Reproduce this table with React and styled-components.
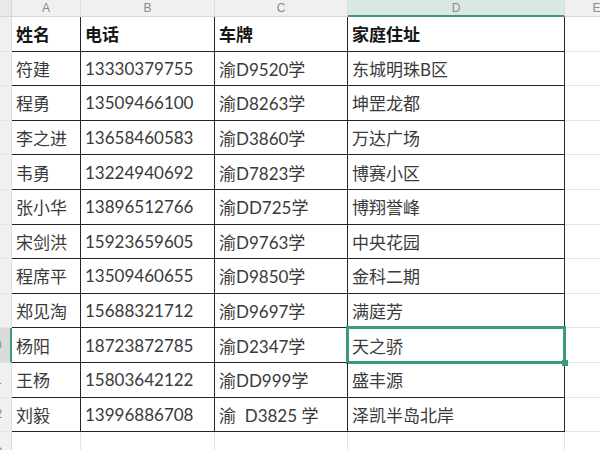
import styled, { createGlobalStyle } from 'styled-components';

const GlobalStyle = createGlobalStyle`
    html, body {
        margin: 0;
        padding: 0;
        background: #ffffff;
        overflow: hidden;
    }
`;

const Sheet = styled.div`
    display: grid;
    grid-template-columns: 32px 69px 134px 133px 217px 64px;
    grid-template-rows: 17px repeat(12, 34.6px) 40px;
    margin-left: -20px;
    width: max-content;
    height: 450px;
    font-family: 'Lato', 'Noto Sans CJK SC', sans-serif;
`;

const Corner = styled.div`
    background: #e9e9e9;
    border-right: 1px solid #d6d6d6;
    border-bottom: 1px solid #d6d6d6;
`;

const ColHead = styled.div`
    display: flex;
    align-items: center;
    justify-content: center;
    font-family: 'Liberation Sans', sans-serif;
    font-size: 12px;
    color: #8a8a8a;
    background: ${(p) => (p.$active ? '#dbe8e2' : '#f0f0f0')};
    border-right: 1px solid #dcdcdc;
    border-bottom: ${(p) => (p.$active ? '2px solid #3b9a7e' : '1px solid #d6d6d6')};
    box-sizing: border-box;
`;

const RowHead = styled.div`
    display: flex;
    align-items: center;
    justify-content: center;
    font-family: 'Liberation Sans', sans-serif;
    font-size: 12px;
    color: #8a8a8a;
    background: ${(p) => (p.$active ? '#d8dbd9' : '#f0f0f0')};
    border-right: ${(p) => (p.$active ? '2px solid #3b9a7e' : '1px solid #dcdcdc')};
    border-bottom: 1px solid #e2e2e2;
    box-sizing: border-box;
`;

const Cell = styled.div`
    position: relative;
    display: flex;
    align-items: center;
    padding-left: 4px;
    font-size: 17px;
    font-weight: ${(p) => (p.$head ? 700 : 400)};
    color: ${(p) => (p.$head ? '#151515' : '#3a3a3a')};
    white-space: pre;
    box-sizing: border-box;
    border-right: ${(p) => (p.$table ? '1.5px solid #262626' : '1px solid #e4e4e4')};
    border-bottom: ${(p) => (p.$table ? '1.5px solid #262626' : '1px solid #e4e4e4')};
    ${(p) =>
        p.$selected &&
        `
        &::after {
            content: '';
            position: absolute;
            top: -2px;
            left: -2px;
            right: -2px;
            bottom: -2px;
            border: 3px solid #3b9a7e;
        }
        &::before {
            content: '';
            position: absolute;
            right: -4px;
            bottom: -4px;
            width: 6px;
            height: 6px;
            background: #3b9a7e;
            z-index: 2;
        }
    `}
`;

const heads = ['姓名', '电话', '车牌', '家庭住址'];

const rows = [
    ['符建', '13330379755', '渝D9520学', '东城明珠B区'],
    ['程勇', '13509466100', '渝D8263学', '坤罡龙都'],
    ['李之进', '13658460583', '渝D3860学', '万达广场'],
    ['韦勇', '13224940692', '渝D7823学', '博赛小区'],
    ['张小华', '13896512766', '渝DD725学', '博翔誉峰'],
    ['宋剑洪', '15923659605', '渝D9763学', '中央花园'],
    ['程席平', '13509460655', '渝D9850学', '金科二期'],
    ['郑见淘', '15688321712', '渝D9697学', '满庭芳'],
    ['杨阳', '18723872785', '渝D2347学', '天之骄'],
    ['王杨', '15803642122', '渝DD999学', '盛丰源'],
    ['刘毅', '13996886708', '渝  D3825 学', '泽凯半岛北岸'],
];

function App() {
    return (
        <>
            <GlobalStyle />
            <Sheet>
                <Corner />
                {['A', 'B', 'C', 'D', 'E'].map((l) => (
                    <ColHead key={l} $active={l === 'D'}>
                        {l}
                    </ColHead>
                ))}

                <RowHead>1</RowHead>
                {heads.map((h) => (
                    <Cell key={h} $table $head>
                        {h}
                    </Cell>
                ))}
                <Cell />

                {rows.map((r, i) => (
                    <>
                        <RowHead key={'h' + i} $active={i === 8}>
                            {i + 2}
                        </RowHead>
                        {r.map((v, j) => (
                            <Cell key={i + '-' + j} $table $selected={i === 8 && j === 3}>
                                {v}
                            </Cell>
                        ))}
                        <Cell key={'e' + i} />
                    </>
                ))}

                <RowHead>13</RowHead>
                <Cell />
                <Cell />
                <Cell />
                <Cell />
                <Cell />
            </Sheet>
        </>
    );
}

export default App;
